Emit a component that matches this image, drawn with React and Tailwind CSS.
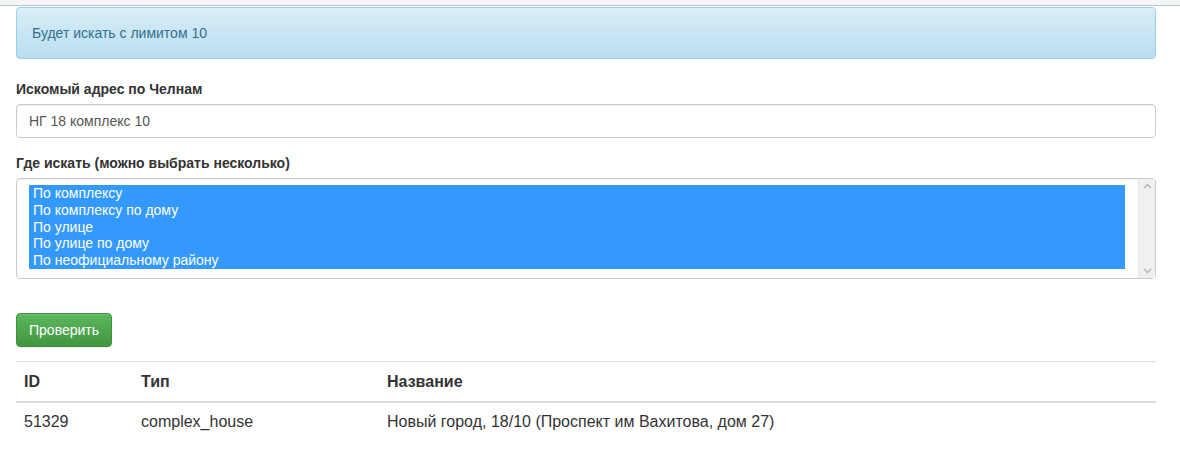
import React from 'react';

const options = [
  'По комплексу',
  'По комплексу по дому',
  'По улице',
  'По улице по дому',
  'По неофициальному району',
];

const App = () => {
  return (
    <div className="min-h-screen bg-white text-[#333] text-[14px] leading-5" style={{ fontFamily: '"Liberation Sans", Arial, sans-serif' }}>
      {/* cut-off strip of the page above */}
      <div className="h-[6px] bg-[#f5f5f5] border-b border-[#b4c8cc]"></div>

      <div className="pl-4 pr-6">
        <div className="mt-px mb-5 px-[15px] py-[15px] rounded border border-[#9acfea] bg-gradient-to-b from-[#d9edf7] to-[#b9def0] text-[#31708f] shadow-[inset_0_1px_0_rgba(255,255,255,0.25)]">
          Будет искать с лимитом 10
        </div>

        <div className="mb-[15px]">
          <label className="block font-bold mb-[5px]">Искомый адрес по Челнам</label>
          <div className="h-[34px] px-3 flex items-center border border-[#ccc] rounded text-[#555] shadow-[inset_0_1px_1px_rgba(0,0,0,0.075)]">
            НГ 18 комплекс 10
          </div>
        </div>

        <div className="mb-[34px]">
          <label className="block font-bold mb-[5px]">Где искать (можно выбрать несколько)</label>
          <div className="h-[101px] flex border border-[#ccc] rounded shadow-[inset_0_1px_1px_rgba(0,0,0,0.075)]">
            <div className="flex-1 pl-3 pr-[13px] pt-[6px]">
              <div className="bg-[#3399ff] text-white leading-[16.8px] pl-[4px]">
                {options.map((o) => (
                  <div key={o}>{o}</div>
                ))}
              </div>
            </div>
            <div className="w-[17px] bg-[#f0f0f0] border-l border-[#e6e6e6] flex flex-col justify-between items-center py-[4px] text-[#b0b0b0]">
              <svg width="9" height="6" viewBox="0 0 9 6"><path d="M1 5 L4.5 1.5 L8 5" fill="none" stroke="currentColor" strokeWidth="1.3" /></svg>
              <svg width="9" height="6" viewBox="0 0 9 6"><path d="M1 1 L4.5 4.5 L8 1" fill="none" stroke="currentColor" strokeWidth="1.3" /></svg>
            </div>
          </div>
        </div>

        <button className="h-[34px] px-3 rounded border border-[#3e8f3e] bg-gradient-to-b from-[#5cb85c] to-[#419641] text-white shadow-[inset_0_1px_0_rgba(255,255,255,0.15),0_1px_1px_rgba(0,0,0,0.075)]">
          Проверить
        </button>

        <table className="w-full mt-[14px] text-[16px] leading-[21px] border-collapse">
          <thead>
            <tr className="border-t border-[#ddd] border-b-2">
              <th className="text-left font-bold p-2 pt-[9px] pb-[9px] w-[117px]">ID</th>
              <th className="text-left font-bold p-2 pt-[9px] pb-[9px] w-[246px]">Тип</th>
              <th className="text-left font-bold p-2 pt-[9px] pb-[9px]">Название</th>
            </tr>
          </thead>
          <tbody>
            <tr className="border-t-2 border-[#ddd]">
              <td className="p-2">51329</td>
              <td className="p-2">complex_house</td>
              <td className="p-2">Новый город, 18/10 (Проспект им Вахитова, дом 27)</td>
            </tr>
          </tbody>
        </table>
      </div>
    </div>
  );
};

export default App;
